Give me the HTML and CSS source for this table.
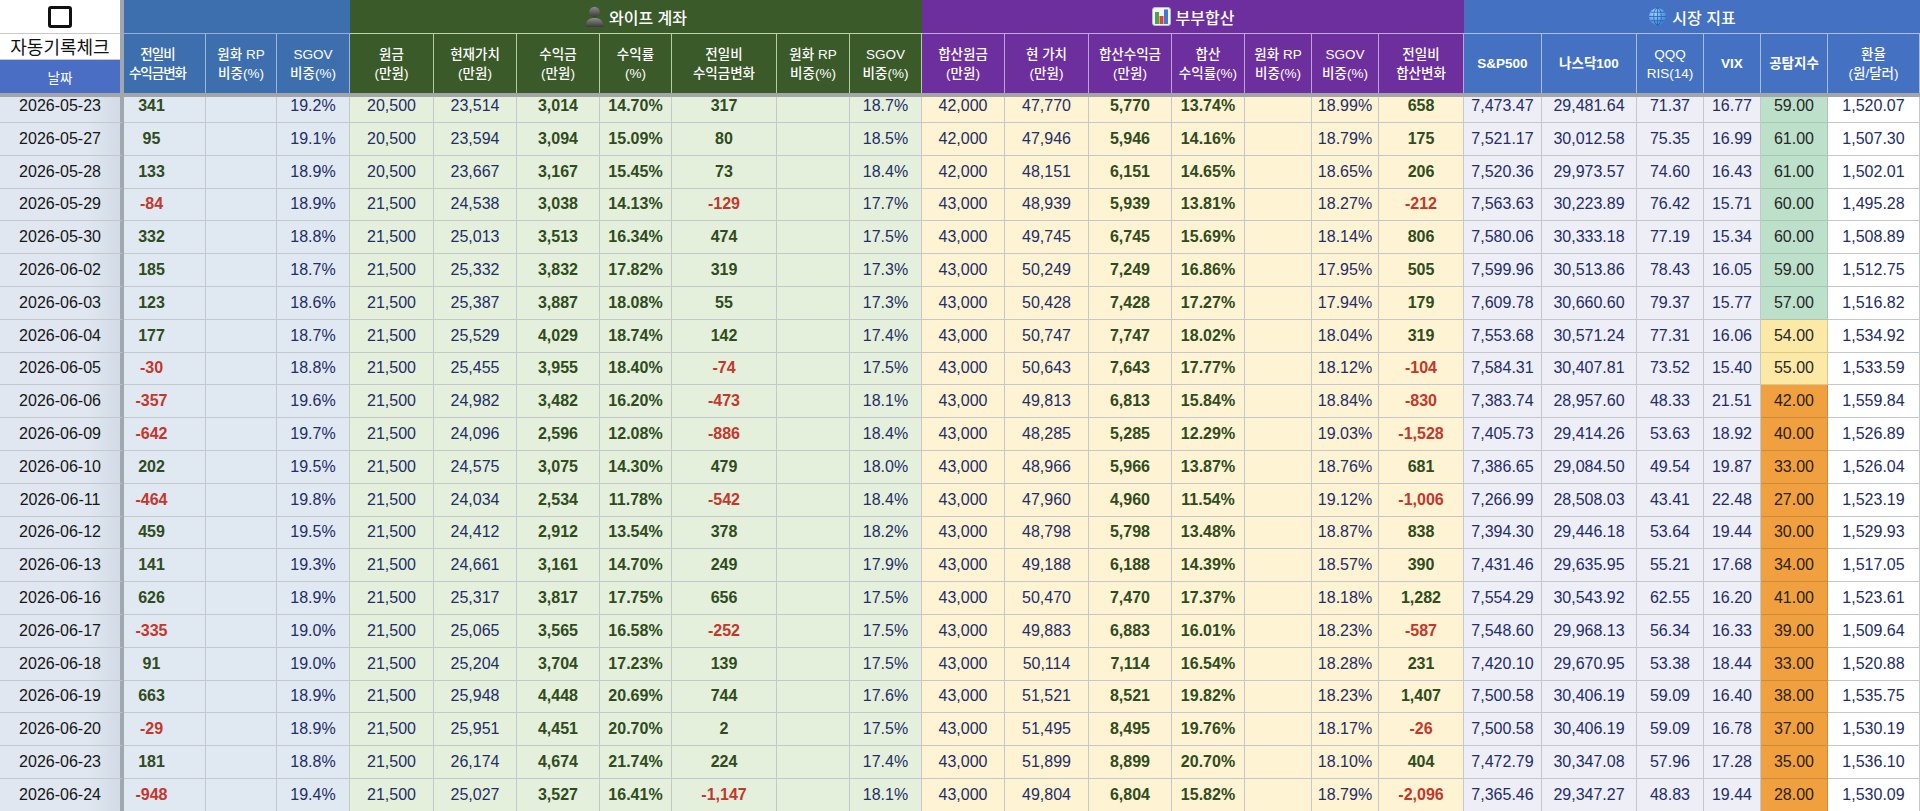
FILE: index.html
```html
<!DOCTYPE html>
<html lang="ko">
<head>
<meta charset="utf-8">
<title>자동기록</title>
<link rel="stylesheet" href="styles.css">
</head>
<body>
<div class="sheet">
  <div class="head">
    <div class="corner">
      <div class="chk"><i></i></div>
      <div class="auto">자동기록체크</div>
      <div class="datehead">날짜</div>
    </div>
    <div class="blank"></div>
    <div class="title t-wife">
      <svg width="19" height="21" viewBox="0 0 18 20"><defs><linearGradient id="pg" x1="0" y1="0" x2="0" y2="1"><stop offset="0" stop-color="#8c8c8c"/><stop offset="1" stop-color="#3a3a3a"/></linearGradient></defs><circle cx="9" cy="5.6" r="5" fill="url(#pg)"/><path d="M0.5 20 C0.5 13.4 4 11.4 9 11.4 C14 11.4 17.5 13.4 17.5 20 Z" fill="url(#pg)"/></svg>
      <span>와이프 계좌</span>
    </div>
    <div class="title t-couple">
      <svg width="19" height="19" viewBox="0 0 19 19"><rect x="0.5" y="0.5" width="18" height="18" rx="2.5" fill="#f3f5f8" stroke="#b7bec7"/><rect x="3" y="5" width="4" height="12" fill="#46a84c"/><rect x="7.5" y="9" width="4" height="8" fill="#e0433a"/><rect x="12" y="2.5" width="4" height="14.5" fill="#3d7bd6"/></svg>
      <span>부부합산</span>
    </div>
    <div class="title t-market">
      <svg width="19" height="19" viewBox="0 0 20 20"><defs><radialGradient id="gg" cx="0.35" cy="0.3" r="0.8"><stop offset="0" stop-color="#a6d6ff"/><stop offset="1" stop-color="#2d7bd3"/></radialGradient></defs><circle cx="10" cy="10" r="9" fill="url(#gg)"/><g fill="none" stroke="#1d5aa8" stroke-width="0.9" opacity="0.85"><ellipse cx="10" cy="10" rx="4" ry="9"/><path d="M10 1 V19 M1 10 H19 M2.6 5.5 H17.4 M2.6 14.5 H17.4"/></g></svg>
      <span>시장 지표</span>
    </div>

    <div class="lab b first">전일비<br>수익금변화</div>
    <div class="lab b">원화 RP<br>비중(%)</div>
    <div class="lab b">SGOV<br>비중(%)</div>

    <div class="lab g">원금<br>(만원)</div>
    <div class="lab g">현재가치<br>(만원)</div>
    <div class="lab g">수익금<br>(만원)</div>
    <div class="lab g">수익률<br>(%)</div>
    <div class="lab g">전일비<br>수익금변화</div>
    <div class="lab g">원화 RP<br>비중(%)</div>
    <div class="lab g">SGOV<br>비중(%)</div>

    <div class="lab p">합산원금<br>(만원)</div>
    <div class="lab p">현 가치<br>(만원)</div>
    <div class="lab p">합산수익금<br>(만원)</div>
    <div class="lab p">합산<br>수익률(%)</div>
    <div class="lab p">원화 RP<br>비중(%)</div>
    <div class="lab p">SGOV<br>비중(%)</div>
    <div class="lab p">전일비<br>합산변화</div>

    <div class="lab m strong">S&amp;P500</div>
    <div class="lab m strong">나스닥100</div>
    <div class="lab m">QQQ<br>RIS(14)</div>
    <div class="lab m strong">VIX</div>
    <div class="lab m strong">공탐지수</div>
    <div class="lab m last">환율<br>(원/달러)</div>
  </div>

  <div class="body">
    <div class="row"><div>2026-05-23</div><div>341</div><div></div><div>19.2%</div><div>20,500</div><div>23,514</div><div>3,014</div><div>14.70%</div><div>317</div><div></div><div>18.7%</div><div>42,000</div><div>47,770</div><div>5,770</div><div>13.74%</div><div></div><div>18.99%</div><div>658</div><div>7,473.47</div><div>29,481.64</div><div>71.37</div><div>16.77</div><div class="fg g">59.00</div><div>1,520.07</div></div>
    <div class="row"><div>2026-05-27</div><div>95</div><div></div><div>19.1%</div><div>20,500</div><div>23,594</div><div>3,094</div><div>15.09%</div><div>80</div><div></div><div>18.5%</div><div>42,000</div><div>47,946</div><div>5,946</div><div>14.16%</div><div></div><div>18.79%</div><div>175</div><div>7,521.17</div><div>30,012.58</div><div>75.35</div><div>16.99</div><div class="fg g">61.00</div><div>1,507.30</div></div>
    <div class="row"><div>2026-05-28</div><div>133</div><div></div><div>18.9%</div><div>20,500</div><div>23,667</div><div>3,167</div><div>15.45%</div><div>73</div><div></div><div>18.4%</div><div>42,000</div><div>48,151</div><div>6,151</div><div>14.65%</div><div></div><div>18.65%</div><div>206</div><div>7,520.36</div><div>29,973.57</div><div>74.60</div><div>16.43</div><div class="fg g">61.00</div><div>1,502.01</div></div>
    <div class="row"><div>2026-05-29</div><div class="dn">-84</div><div></div><div>18.9%</div><div>21,500</div><div>24,538</div><div>3,038</div><div>14.13%</div><div class="dn">-129</div><div></div><div>17.7%</div><div>43,000</div><div>48,939</div><div>5,939</div><div>13.81%</div><div></div><div>18.27%</div><div class="dn">-212</div><div>7,563.63</div><div>30,223.89</div><div>76.42</div><div>15.71</div><div class="fg g">60.00</div><div>1,495.28</div></div>
    <div class="row"><div>2026-05-30</div><div>332</div><div></div><div>18.8%</div><div>21,500</div><div>25,013</div><div>3,513</div><div>16.34%</div><div>474</div><div></div><div>17.5%</div><div>43,000</div><div>49,745</div><div>6,745</div><div>15.69%</div><div></div><div>18.14%</div><div>806</div><div>7,580.06</div><div>30,333.18</div><div>77.19</div><div>15.34</div><div class="fg g">60.00</div><div>1,508.89</div></div>
    <div class="row"><div>2026-06-02</div><div>185</div><div></div><div>18.7%</div><div>21,500</div><div>25,332</div><div>3,832</div><div>17.82%</div><div>319</div><div></div><div>17.3%</div><div>43,000</div><div>50,249</div><div>7,249</div><div>16.86%</div><div></div><div>17.95%</div><div>505</div><div>7,599.96</div><div>30,513.86</div><div>78.43</div><div>16.05</div><div class="fg g">59.00</div><div>1,512.75</div></div>
    <div class="row"><div>2026-06-03</div><div>123</div><div></div><div>18.6%</div><div>21,500</div><div>25,387</div><div>3,887</div><div>18.08%</div><div>55</div><div></div><div>17.3%</div><div>43,000</div><div>50,428</div><div>7,428</div><div>17.27%</div><div></div><div>17.94%</div><div>179</div><div>7,609.78</div><div>30,660.60</div><div>79.37</div><div>15.77</div><div class="fg g">57.00</div><div>1,516.82</div></div>
    <div class="row"><div>2026-06-04</div><div>177</div><div></div><div>18.7%</div><div>21,500</div><div>25,529</div><div>4,029</div><div>18.74%</div><div>142</div><div></div><div>17.4%</div><div>43,000</div><div>50,747</div><div>7,747</div><div>18.02%</div><div></div><div>18.04%</div><div>319</div><div>7,553.68</div><div>30,571.24</div><div>77.31</div><div>16.06</div><div class="fg y">54.00</div><div>1,534.92</div></div>
    <div class="row"><div>2026-06-05</div><div class="dn">-30</div><div></div><div>18.8%</div><div>21,500</div><div>25,455</div><div>3,955</div><div>18.40%</div><div class="dn">-74</div><div></div><div>17.5%</div><div>43,000</div><div>50,643</div><div>7,643</div><div>17.77%</div><div></div><div>18.12%</div><div class="dn">-104</div><div>7,584.31</div><div>30,407.81</div><div>73.52</div><div>15.40</div><div class="fg y">55.00</div><div>1,533.59</div></div>
    <div class="row"><div>2026-06-06</div><div class="dn">-357</div><div></div><div>19.6%</div><div>21,500</div><div>24,982</div><div>3,482</div><div>16.20%</div><div class="dn">-473</div><div></div><div>18.1%</div><div>43,000</div><div>49,813</div><div>6,813</div><div>15.84%</div><div></div><div>18.84%</div><div class="dn">-830</div><div>7,383.74</div><div>28,957.60</div><div>48.33</div><div>21.51</div><div class="fg o">42.00</div><div>1,559.84</div></div>
    <div class="row"><div>2026-06-09</div><div class="dn">-642</div><div></div><div>19.7%</div><div>21,500</div><div>24,096</div><div>2,596</div><div>12.08%</div><div class="dn">-886</div><div></div><div>18.4%</div><div>43,000</div><div>48,285</div><div>5,285</div><div>12.29%</div><div></div><div>19.03%</div><div class="dn">-1,528</div><div>7,405.73</div><div>29,414.26</div><div>53.63</div><div>18.92</div><div class="fg o">40.00</div><div>1,526.89</div></div>
    <div class="row"><div>2026-06-10</div><div>202</div><div></div><div>19.5%</div><div>21,500</div><div>24,575</div><div>3,075</div><div>14.30%</div><div>479</div><div></div><div>18.0%</div><div>43,000</div><div>48,966</div><div>5,966</div><div>13.87%</div><div></div><div>18.76%</div><div>681</div><div>7,386.65</div><div>29,084.50</div><div>49.54</div><div>19.87</div><div class="fg o">33.00</div><div>1,526.04</div></div>
    <div class="row"><div>2026-06-11</div><div class="dn">-464</div><div></div><div>19.8%</div><div>21,500</div><div>24,034</div><div>2,534</div><div>11.78%</div><div class="dn">-542</div><div></div><div>18.4%</div><div>43,000</div><div>47,960</div><div>4,960</div><div>11.54%</div><div></div><div>19.12%</div><div class="dn">-1,006</div><div>7,266.99</div><div>28,508.03</div><div>43.41</div><div>22.48</div><div class="fg o">27.00</div><div>1,523.19</div></div>
    <div class="row"><div>2026-06-12</div><div>459</div><div></div><div>19.5%</div><div>21,500</div><div>24,412</div><div>2,912</div><div>13.54%</div><div>378</div><div></div><div>18.2%</div><div>43,000</div><div>48,798</div><div>5,798</div><div>13.48%</div><div></div><div>18.87%</div><div>838</div><div>7,394.30</div><div>29,446.18</div><div>53.64</div><div>19.44</div><div class="fg o">30.00</div><div>1,529.93</div></div>
    <div class="row"><div>2026-06-13</div><div>141</div><div></div><div>19.3%</div><div>21,500</div><div>24,661</div><div>3,161</div><div>14.70%</div><div>249</div><div></div><div>17.9%</div><div>43,000</div><div>49,188</div><div>6,188</div><div>14.39%</div><div></div><div>18.57%</div><div>390</div><div>7,431.46</div><div>29,635.95</div><div>55.21</div><div>17.68</div><div class="fg o">34.00</div><div>1,517.05</div></div>
    <div class="row"><div>2026-06-16</div><div>626</div><div></div><div>18.9%</div><div>21,500</div><div>25,317</div><div>3,817</div><div>17.75%</div><div>656</div><div></div><div>17.5%</div><div>43,000</div><div>50,470</div><div>7,470</div><div>17.37%</div><div></div><div>18.18%</div><div>1,282</div><div>7,554.29</div><div>30,543.92</div><div>62.55</div><div>16.20</div><div class="fg o">41.00</div><div>1,523.61</div></div>
    <div class="row"><div>2026-06-17</div><div class="dn">-335</div><div></div><div>19.0%</div><div>21,500</div><div>25,065</div><div>3,565</div><div>16.58%</div><div class="dn">-252</div><div></div><div>17.5%</div><div>43,000</div><div>49,883</div><div>6,883</div><div>16.01%</div><div></div><div>18.23%</div><div class="dn">-587</div><div>7,548.60</div><div>29,968.13</div><div>56.34</div><div>16.33</div><div class="fg o">39.00</div><div>1,509.64</div></div>
    <div class="row"><div>2026-06-18</div><div>91</div><div></div><div>19.0%</div><div>21,500</div><div>25,204</div><div>3,704</div><div>17.23%</div><div>139</div><div></div><div>17.5%</div><div>43,000</div><div>50,114</div><div>7,114</div><div>16.54%</div><div></div><div>18.28%</div><div>231</div><div>7,420.10</div><div>29,670.95</div><div>53.38</div><div>18.44</div><div class="fg o">33.00</div><div>1,520.88</div></div>
    <div class="row"><div>2026-06-19</div><div>663</div><div></div><div>18.9%</div><div>21,500</div><div>25,948</div><div>4,448</div><div>20.69%</div><div>744</div><div></div><div>17.6%</div><div>43,000</div><div>51,521</div><div>8,521</div><div>19.82%</div><div></div><div>18.23%</div><div>1,407</div><div>7,500.58</div><div>30,406.19</div><div>59.09</div><div>16.40</div><div class="fg o">38.00</div><div>1,535.75</div></div>
    <div class="row"><div>2026-06-20</div><div class="dn">-29</div><div></div><div>18.9%</div><div>21,500</div><div>25,951</div><div>4,451</div><div>20.70%</div><div>2</div><div></div><div>17.5%</div><div>43,000</div><div>51,495</div><div>8,495</div><div>19.76%</div><div></div><div>18.17%</div><div class="dn">-26</div><div>7,500.58</div><div>30,406.19</div><div>59.09</div><div>16.78</div><div class="fg o">37.00</div><div>1,530.19</div></div>
    <div class="row"><div>2026-06-23</div><div>181</div><div></div><div>18.8%</div><div>21,500</div><div>26,174</div><div>4,674</div><div>21.74%</div><div>224</div><div></div><div>17.4%</div><div>43,000</div><div>51,899</div><div>8,899</div><div>20.70%</div><div></div><div>18.10%</div><div>404</div><div>7,472.79</div><div>30,347.08</div><div>57.96</div><div>17.28</div><div class="fg o">35.00</div><div>1,536.10</div></div>
    <div class="row"><div>2026-06-24</div><div class="dn">-948</div><div></div><div>19.4%</div><div>21,500</div><div>25,027</div><div>3,527</div><div>16.41%</div><div class="dn">-1,147</div><div></div><div>18.1%</div><div>43,000</div><div>49,804</div><div>6,804</div><div>15.82%</div><div></div><div>18.79%</div><div class="dn">-2,096</div><div>7,365.46</div><div>29,347.27</div><div>48.83</div><div>19.44</div><div class="fg o">28.00</div><div>1,530.09</div></div>
  </div>
</div>
</body>
</html>
```

FILE: styles.css
```css
:root {
  --cols: 124px 82px 71px 73px 84px 83px 83px 72px 105px 73px 72px 83px 84px 83px 73px 67px 67px 85px 78px 95px 67px 57px 67px 92px;
  --blueA: #3d6fae;
  --green: #3a5a29;
  --purple: #6d2f9e;
  --blueB: #4571c2;
}

html, body {
  margin: 0;
  padding: 0;
  width: 1920px;
  height: 811px;
  overflow: hidden;
  background: #ffffff;
}

body {
  font-family: "Liberation Sans", Arial, "Noto Sans CJK KR", sans-serif;
}

.sheet {
  display: flex;
  flex-direction: column;
  height: 811px;
}

/* ---------- header ---------- */
.head {
  flex: none;
  display: grid;
  grid-template-columns: var(--cols);
  grid-template-rows: 34px 59px;
  border-bottom: 4px solid #a3a5a9;
}

.corner {
  grid-column: 1;
  grid-row: 1 / span 2;
  display: flex;
  flex-direction: column;
  background: #ffffff;
  border-right: 4px solid #a0a7b1;
}

.chk {
  box-sizing: border-box;
  height: 34px;
  border-bottom: 1px solid #c9c9c9;
  display: flex;
  align-items: center;
  justify-content: center;
}

.chk i {
  display: block;
  width: 18px;
  height: 16px;
  border: 3px solid #111111;
  border-radius: 3px;
}

.auto {
  box-sizing: border-box;
  height: 26px;
  line-height: 25px;
  text-align: center;
  font-family: "Noto Sans CJK KR", sans-serif;
  font-size: 18px;
  color: #111111;
  border-bottom: 1px solid #c9c9c9;
  white-space: nowrap;
}

.datehead {
  flex: 1;
  background: #4a6ec4;
  color: #ffffff;
  display: flex;
  align-items: center;
  justify-content: center;
  font-size: 13.5px;
}

.blank {
  grid-column: 2 / span 3;
  grid-row: 1;
  background: var(--blueA);
  border-bottom: 1px solid #93b1da;
}

.title {
  grid-row: 1;
  box-sizing: border-box;
  display: flex;
  align-items: center;
  justify-content: center;
  gap: 5px;
  color: #ffffff;
  font-size: 16px;
  font-weight: 500;
  border-bottom: 1px solid;
}

.title svg { flex: none; }

.t-wife {
  grid-column: 5 / span 7;
  background: var(--green);
  border-bottom-color: #bcd5a6;
}

.t-couple {
  grid-column: 12 / span 7;
  background: var(--purple);
  border-bottom-color: #c3a7dc;
}

.t-market {
  grid-column: 19 / span 6;
  background: var(--blueB);
  border-bottom-color: #a8c0e8;
}

.lab {
  grid-row: 2;
  box-sizing: border-box;
  display: flex;
  align-items: center;
  justify-content: center;
  text-align: center;
  color: #ffffff;
  font-size: 13.5px;
  font-weight: 500;
  line-height: 19px;
  border-right: 1px solid;
  white-space: nowrap;
  overflow: hidden;
}

.lab.first { padding-right: 14px; letter-spacing: -1px; }
.lab.b { background: var(--blueA); border-right-color: #9ab6dc; }
.lab.g { background: var(--green); border-right-color: #b3cf9b; }
.lab.p { background: var(--purple); border-right-color: #bfa3d8; }
.lab.m { background: var(--blueB); border-right-color: #a4bde6; }
.lab.strong { font-weight: 700; }

/* ---------- body ---------- */
.body {
  flex: 1;
  overflow: hidden;
}

.row {
  display: grid;
  grid-template-columns: var(--cols);
  height: 32.8px;
}

.body .row:first-child {
  margin-top: -6.8px;
}

.row > div {
  box-sizing: border-box;
  display: flex;
  align-items: center;
  justify-content: center;
  border-right: 1px solid #c4c7cc;
  border-bottom: 1px solid #c4c7cc;
  font-size: 16px;
  color: #232d66;
  white-space: nowrap;
}

.row > div:nth-child(1) {
  background: linear-gradient(90deg, #e0e7f0 72%, #d2dbe6);
  color: #161616;
  border-right: 4px solid #a0a7b1;
}

.row > div:nth-child(n+2):nth-child(-n+4) { background: #e0e8f2; }
.row > div:nth-child(2) { padding-right: 26px; }
.row > div:nth-child(n+5):nth-child(-n+11) { background: #e5f0dc; }
.row > div:nth-child(n+12):nth-child(-n+18) { background: #fef3d2; }
.row > div:nth-child(n+19):nth-child(-n+22) { background: #eeeef6; }
.row > div:nth-child(24) { background: #ffffff; }

.row > div:is(:nth-child(2), :nth-child(7), :nth-child(8), :nth-child(9), :nth-child(14), :nth-child(15), :nth-child(18)) {
  font-weight: 700;
  color: #2f4b20;
}

.row > div.dn { color: #c3372c; }

.row > div.fg { color: #262626; }
.row > div.g { background: #bde0cb; border-right-color: #a7c7b4; border-bottom-color: #a7c7b4; }
.row > div.y { background: #fde9a6; border-right-color: #d8c98f; border-bottom-color: #d8c98f; }
.row > div.o { background: #f0a03e; border-right-color: #cf8a3c; border-bottom-color: #cf8a3c; color: #2a2114; }
```
